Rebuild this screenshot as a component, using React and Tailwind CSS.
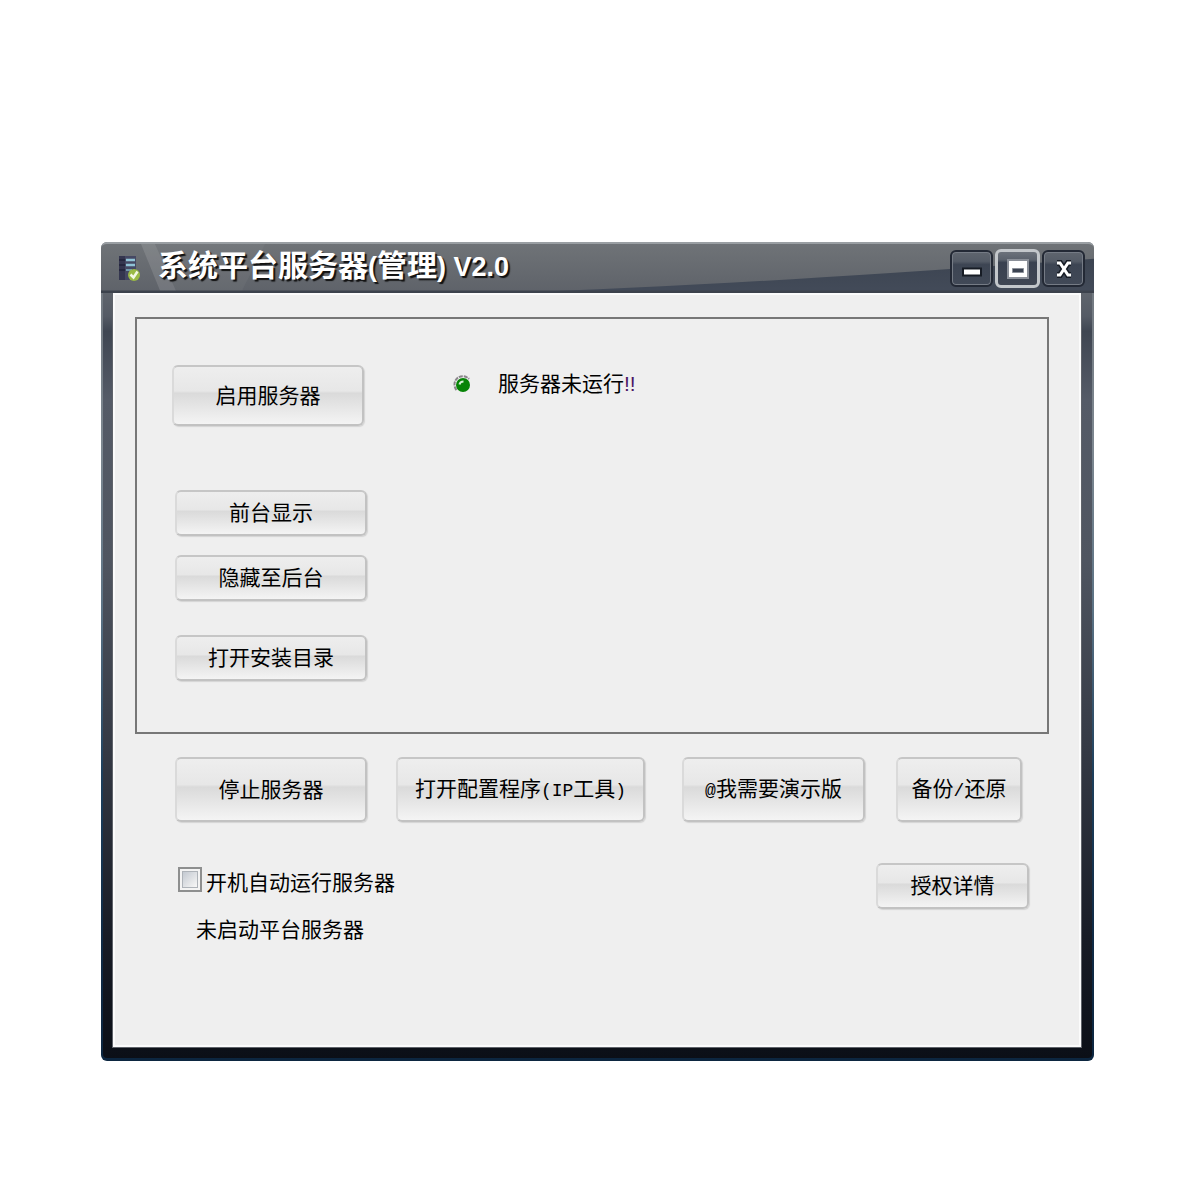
import { useState } from "react";
import clsx from "clsx";

function PushButton({ className, children }) {
  return (
    <button
      type="button"
      className={clsx(
        "flex items-center justify-center whitespace-nowrap rounded-md border-2 border-t-[#c6c6c6] border-l-[#dadada] border-r-[#c2c2c2] border-b-[#c2c2c2] bg-[linear-gradient(to_bottom,#eeeeee_0%,#e7e7e7_42%,#dadada_46%,#f4f4f4_100%)] shadow-[1px_1px_1px_#d4d4d4] active:brightness-95",
        className
      )}
    >
      {children}
    </button>
  );
}

// half-width latin characters between the full-width ones
function Half({ children }) {
  return <span className="font-['Liberation_Mono',monospace] text-[18px]">{children}</span>;
}

function ServerIcon() {
  return (
    <svg width="24" height="28" viewBox="0 0 24 28" aria-hidden="true">
      <path d="M1 1h17v24H1z" fill="#454863" />
      <path d="M1 1h6v24H1z" fill="#34364f" />
      <path d="M1 5h6M1 10h6M1 15h6" stroke="#20223a" strokeWidth="1.5" />
      <path d="M8 5h9M8 10h9" stroke="#8fc3d6" strokeWidth="2.5" />
      <path d="M8 15h6" stroke="#7099ad" strokeWidth="2" />
      <circle cx="16" cy="20" r="6" fill="#9aba45" />
      <path d="M12.5 19.5l3 3 4-6" fill="none" stroke="#f4f8e4" strokeWidth="2.5" />
    </svg>
  );
}

function StatusLed() {
  return (
    <svg width="18" height="20" viewBox="0 0 18 20" role="img" aria-label="状态">
      <path
        d="M3.5 16A8 8 0 1 1 16 5"
        fill="none"
        stroke="#8b858b"
        strokeWidth="2"
        strokeDasharray="4 1"
      />
      <circle cx="10" cy="11" r="7" fill="#078407" />
      <path d="M6.5 10.5q.5-3 4-3" fill="none" stroke="#d5efd5" strokeWidth="2" />
    </svg>
  );
}

function CaptionButton({ label, active, children }) {
  return (
    <button
      type="button"
      aria-label={label}
      className={clsx(
        "flex items-center justify-center rounded-md",
        active
          ? "h-[39px] w-[45px] border-[3px] border-[#c3c7cb] bg-[linear-gradient(to_bottom,#6c727b_0%,#5a616c_24%,#394150_32%,#3f4653_100%)]"
          : "h-[37px] w-[43px] border-2 border-[#232935] bg-[linear-gradient(to_bottom,#5f656e_0%,#555c67_28%,#3d4553_38%,#414957_100%)] shadow-[inset_0_0_0_1px_#757b85]"
      )}
    >
      {children}
    </button>
  );
}

function TitleBar() {
  return (
    <header className="relative flex h-[51px] items-center overflow-hidden rounded-t-md border-t-2 border-[#9a9fa3] bg-[linear-gradient(to_bottom,#6f7377,#5e6269)] pl-[17px] pr-[9px]">
      <svg
        className="absolute inset-0 h-full w-full"
        viewBox="0 0 993 50"
        preserveAspectRatio="none"
        aria-hidden="true"
      >
        <defs>
          <linearGradient id="shade" x1="0" y1="0" x2="0" y2="1">
            <stop offset="0" stopColor="#3c4451" />
            <stop offset="1" stopColor="#434b59" />
          </linearGradient>
        </defs>
        <path d="M40 0h14l22 50H60z" fill="#fff" opacity=".12" />
        <path d="M54 0h110l-24 50H76z" fill="#fff" opacity=".04" />
        <path d="M400 50Q640 42 993 15v35z" fill="url(#shade)" />
        <path d="M0 49h993" stroke="#3c424c" strokeWidth="3" />
      </svg>
      <div className="relative flex flex-1 items-center gap-[16px]">
        <ServerIcon />
        <h1 className="whitespace-nowrap pb-[4px] text-[30px] font-bold leading-[40px] text-white [text-shadow:2px_2px_1px_#111]">
          系统平台服务器<span className="text-[27px]">(</span>管理
          <span className="text-[27px]">) V2.0</span>
        </h1>
      </div>
      <div className="relative flex items-center gap-[2px]">
        <CaptionButton label="最小化">
          <svg width="20" height="20" viewBox="0 0 20 20">
            <path d="M1 9.5h18v7H1z" fill="#fff" stroke="#171c25" strokeWidth="2" />
          </svg>
        </CaptionButton>
        <CaptionButton label="最大化" active>
          <svg width="22" height="20" viewBox="0 0 22 20">
            <path d="M1 1h20v18H1z" fill="#fff" stroke="#8b9099" strokeWidth="2" />
            <path d="M5.5 9.5h11v4h-11z" fill="#3b4351" stroke="#8b9099" />
          </svg>
        </CaptionButton>
        <CaptionButton label="关闭">
          <svg width="20" height="20" viewBox="0 0 20 20">
            <path d="M3 4h3l8 12h3M17 4h-3L6 16H3" fill="none" stroke="#171c25" strokeWidth="6" />
            <path d="M3 4h3l8 12h3M17 4h-3L6 16H3" fill="none" stroke="#fff" strokeWidth="3" />
          </svg>
        </CaptionButton>
      </div>
    </header>
  );
}

export default function App() {
  const [autoRun, setAutoRun] = useState(false);

  return (
    <main className="min-h-screen bg-white pb-[139px] pl-[101px] pr-[106px] pt-[242px] font-['Liberation_Sans','Noto_Sans_CJK_SC',sans-serif] text-[21px] leading-[28px] text-black">
      {/* the outer gradient shows as a thin rim round the frame */}
      <div className="rounded-md bg-[linear-gradient(to_bottom,#6f757c_0%,#7d8790_25%,#5b7284_45%,#1d3f5c_65%,#0f2a45_85%,#0c2640_100%)]">
        <TitleBar />

        <div className="px-[2px] pb-[3px]">
          <div className="rounded-b bg-[linear-gradient(to_bottom,#5f646c_0%,#555b65_3%,#3f4652_5%,#555b67_14%,#4f5560_35%,#343944_60%,#171b25_85%,#0b0f17_100%)] pb-[11px] pl-[10px] pr-[11px]">
            <div className="border-2 border-[#fbfbfb] bg-[#efefef] pb-[101px] pl-[20px] pr-[30px] pt-[22px] outline outline-[#5f636a]">
              {/* server panel */}
              <section className="flex h-[417px] items-start border-2 border-[#777] pl-[35px] pt-[46px]">
                <div className="flex w-[195px] flex-col">
                  <PushButton className="h-[61px] w-[192px]">启用服务器</PushButton>
                  <PushButton className="ml-[3px] mt-[64px] h-[46px] w-[192px]">前台显示</PushButton>
                  <PushButton className="ml-[3px] mt-[19px] h-[46px] w-[192px]">隐藏至后台</PushButton>
                  <PushButton className="ml-[3px] mt-[34px] h-[46px] w-[192px]">打开安装目录</PushButton>
                </div>
                <p className="ml-[86px] mt-[5px] flex items-center gap-[27px]">
                  <StatusLed />
                  <span>
                    服务器未运行<span className="text-[#4b1766]">!!</span>
                  </span>
                </p>
              </section>

              <div className="mt-[23px] flex items-center pl-[40px]">
                <PushButton className="h-[65px] w-[192px]">停止服务器</PushButton>
                <PushButton className="ml-[29px] h-[65px] w-[249px]">
                  <span>
                    打开配置程序<Half>(IP</Half>工具<Half>)</Half>
                  </span>
                </PushButton>
                <PushButton className="ml-[37px] h-[65px] w-[183px]">
                  <span>
                    <Half>@</Half>我需要演示版
                  </span>
                </PushButton>
                <PushButton className="ml-[31px] h-[65px] w-[126px]">
                  <span>
                    备份<Half>/</Half>还原
                  </span>
                </PushButton>
              </div>

              <div className="mt-[41px] flex items-start justify-between pl-[43px] pr-[20px]">
                <div>
                  <label className="mt-[4px] flex items-center gap-[4px]">
                    <input
                      type="checkbox"
                      checked={autoRun}
                      onChange={(e) => setAutoRun(e.target.checked)}
                      className="mb-[6px] h-[25px] w-[24px] appearance-none border-2 border-[#8e8f8f] bg-[linear-gradient(135deg,#b8bfc9,#f4f4f4_80%)] shadow-[inset_0_0_0_2px_#f4f4f4,inset_0_0_0_3px_#aeb3b9] checked:bg-[#4b6f9c] checked:bg-none"
                    />
                    开机自动运行服务器
                  </label>
                  <p className="ml-[18px] mt-[18px]">未启动平台服务器</p>
                </div>
                <PushButton className="h-[46px] w-[153px]">授权详情</PushButton>
              </div>
            </div>
          </div>
        </div>
      </div>
    </main>
  );
}
